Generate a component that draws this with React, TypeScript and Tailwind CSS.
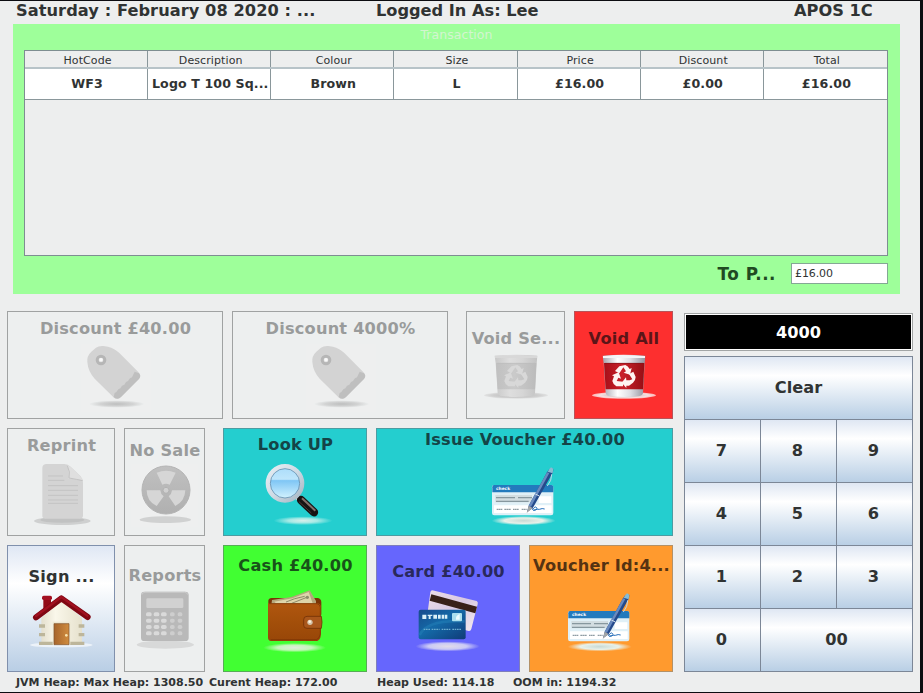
import React from "react";

type IconProps = { muted?: boolean };

const TagIcon = () => (
  <svg width="80" height="80" viewBox="225 114 240 240" className="shrink-0">
    <defs>
      <radialGradient id="tagShadow"><stop offset="0" stopColor="#bdbebe" /><stop offset="0.6" stopColor="#d2d3d3" /><stop offset="1" stopColor="#eceeee" /></radialGradient>
    </defs>
    <rect x="243" y="132" width="210" height="205" fill="#eeefef" />
    <ellipse cx="350" cy="312" rx="82" ry="11" fill="url(#tagShadow)" />
    <path d="M262 186Q260 168 274 155L288 143Q296 137 310 138L324 140Q344 145 358 159L417 218Q425 228 416 238L363 291Q352 301 342 293L284 236Q264 214 262 186Z" fill="#d3d3d3" />
    <path d="M404 215l13 5q8 8-1 18l-53 53q-11 10-22 0l3-12 5-3 6-8 6-3 5-8 7-3 5-8 6-3 6-8 6-3z" fill="#bfbfbf" />
    <circle cx="303" cy="180" r="11.500" fill="#e4e4e4" stroke="#b6b6b6" strokeWidth="9" />
    <circle cx="303" cy="179" r="5" fill="#fafafa" />
  </svg>
);

const BinIcon = ({ muted }: IconProps) => {
  const id = muted ? "binMuted" : "binRed";
  return (
    <svg width="80" height="70" viewBox="76 144 240 210" className="shrink-0">
      <defs>
        <linearGradient id={id}>
          <stop offset="0" stopColor={muted ? "#c8c8c8" : "#a3a3ad"} />
          <stop offset="0.35" stopColor={muted ? "#dedede" : "#ffffff"} />
          <stop offset="0.65" stopColor={muted ? "#d6d6d6" : "#dedee4"} />
          <stop offset="1" stopColor={muted ? "#c3c3c3" : "#92929d"} />
        </linearGradient>
        <linearGradient id={id + "Body"}>
          <stop offset="0" stopColor={muted ? "#c0c0c0" : "#a60f18"} />
          <stop offset="0.45" stopColor={muted ? "#cacaca" : "#c9202a"} />
          <stop offset="1" stopColor={muted ? "#bbbbbb" : "#970e14"} />
        </linearGradient>
        <radialGradient id={id + "Shade"}>
          <stop offset="0" stopColor={muted ? "#b5b5b5" : "#b9a0a0"} />
          <stop offset="0.75" stopColor={muted ? "#d0d0d0" : "#f5e0e0"} />
          <stop offset="1" stopColor={muted ? "#e2e3e3" : "#ffb4b4"} />
        </radialGradient>
      </defs>
      <ellipse cx="196" cy="286" rx="96" ry="10" fill={`url(#${id}Shade)`} />
      <path d="M132 167Q195 162 260 167L258 190 253 280Q252 287 243 288Q195 294 150 288Q143 287 141 280L135 190Z" fill={`url(#${id})`} />
      <path d="M136 189H257L253 268H141Z" fill={`url(#${id}Body)`} />
      <path d="M133 168Q195 164 259 168V174H133Z" fill={muted ? "#d8d8d8" : "#f4f4f7"} />
      <path d="M139 190h115" stroke={muted ? "#bbbbbb" : "#81131b"} strokeWidth="2" />
      <g fill={muted ? "#d8d8d8" : "#fff4f2"}>
        <path d="M182 199l18-4q8 3 13 12l6-3-5 20-19-6 7-4-8-12-12 18-13-7z" />
        <path d="M211 222l13-7 7 16q0 9-8 17l-12 9h-8v7l-14-16 13-16 1 9h10l8-3z" />
        <path d="M166 229l-6-3 20-9 7 19-8-3-5 10 19 2v14h-20q-10-6-12-16z" />
      </g>
    </svg>
  );
};

const DocumentIcon = () => (
  <svg width="80" height="80" viewBox="63 105 240 240" className="shrink-0">
    <ellipse cx="187" cy="303" rx="85" ry="12" fill="#cfd0d0" />
    <ellipse cx="187" cy="300" rx="66" ry="8" fill="#c1c2c2" />
    <path d="M127 143Q128 132 140 132H193Q204 132 212 140L241 168Q249 176 249 188V289Q248 296 240 296H136Q127 295 127 288Z" fill="#d4d4d4" />
    <path d="M201 134Q211 139 219 147L239 167Q247 175 249 184Q241 177 226 178L206 176Q209 158 201 134Z" fill="#dfdfdf" />
    <path d="M202 137Q212 157 207 174Q230 178 248 182" fill="none" stroke="#c3c3c3" strokeWidth="3" />
    <path d="M144 168h45M144 181h49M144 197h90M144 211h90M144 226h90M144 240h90M144 250h90" stroke="#c3c3c3" strokeWidth="3" />
  </svg>
);

const RadiationIcon = () => (
  <svg width="72" height="75" viewBox="385 120 216 225" className="shrink-0">
    <defs><linearGradient id="disc" x1="0" y1="0" x2="0" y2="1"><stop offset="0" stopColor="#c0c0c0" /><stop offset="1" stopColor="#b0b0b0" /></linearGradient></defs>
    <rect x="390" y="132" width="204" height="190" fill="#eeefef" />
    <ellipse cx="494" cy="299" rx="77" ry="10" fill="#d0d1d1" />
    <circle cx="496" cy="210" r="72" fill="url(#disc)" stroke="#b4b4b4" strokeWidth="3" />
    <g fill="#d6d6d6">
      <path d="M468 158Q496 147 525 158L507 194Q496 188 485 194Z" />
      <path d="M438 211H479Q480 223 489 229L468 258Q438 244 438 211Z" />
      <path d="M514 211H554Q553 243 524 258L504 229Q513 223 514 211Z" />
    </g>
    <circle cx="496" cy="211" r="9" fill="#d0d0d0" stroke="#b2b2b2" strokeWidth="3" />
  </svg>
);

const HouseIcon = () => (
  <svg width="80" height="80" viewBox="63 498 240 240" className="shrink-0">
    <defs>
      <linearGradient id="wall"><stop offset="0" stopColor="#e4dfce" /><stop offset="0.35" stopColor="#faf7ea" /><stop offset="1" stopColor="#e6e1cd" /></linearGradient>
      <linearGradient id="door"><stop offset="0" stopColor="#a7652c" /><stop offset="1" stopColor="#d08c3f" /></linearGradient>
    </defs>
    <ellipse cx="184" cy="675" rx="94" ry="7" fill="#f4f8fb" opacity="0.8" />
    <path d="M130 538h23v30l-23 17z" fill="#920b18" />
    <rect x="126" y="527" width="30" height="13" rx="5" fill="#a31021" />
    <path d="M124 594L184 541 246 594V674H124Z" fill="url(#wall)" />
    <g fill="#bdb69b">
      <path d="M117 613h18v10h-18zM117 639h18v10h-18zM117 665h42v10h-42zM236 613h17v10h-17zM236 639h17v10h-17zM210 665h43v10h-43z" />
    </g>
    <path d="M158 605h53v69h-53z" fill="#eee8d3" />
    <path d="M162 611h45v63h-45z" fill="url(#door)" stroke="#81512a" strokeWidth="2" />
    <circle cx="199" cy="646" r="4" fill="#f9e4ae" />
    <path d="M108 592L184 535 263 591" fill="none" stroke="#800713" strokeWidth="18" strokeLinecap="round" strokeLinejoin="round" />
    <path d="M108 588L184 531 262 587" fill="none" stroke="#a01020" strokeWidth="7" strokeLinecap="round" strokeLinejoin="round" />
  </svg>
);

const calcColumns = [436, 459, 481, 508, 531];
const calcRows = [577, 596, 615, 634];

const CalculatorIcon = () => (
  <svg width="72" height="80" viewBox="385 495 216 240" className="shrink-0">
    <ellipse cx="494" cy="674" rx="86" ry="12" fill="#d8d9d9" />
    <rect x="421" y="515" width="143" height="148" rx="10" fill="#b9b9b9" />
    <path d="M424 524q1-7 9-7h119q8 0 9 7" fill="none" stroke="#cbcbcb" strokeWidth="3" />
    <rect x="437" y="535" width="111" height="29" rx="4" fill="#d1d1d1" />
    {calcRows.map((y) => calcColumns.map((x, i) => (
      <rect key={`${x}-${y}`} x={x} y={y} width={i > 2 ? 14 : 17} height="12" rx="5" fill={i > 2 ? "#cecece" : "#dadada"} />
    )))}
  </svg>
);

const MagnifierIcon = () => (
  <svg width="80" height="80" viewBox="120 102 240 240" className="shrink-0">
    <defs>
      <linearGradient id="lens" x1="0" y1="0" x2="0" y2="1"><stop offset="0" stopColor="#a9dcfb" /><stop offset="0.38" stopColor="#bfe6fc" /><stop offset="0.42" stopColor="#7fc6f5" /><stop offset="1" stopColor="#dcf7ff" /></linearGradient>
      <linearGradient id="rim" x1="0" y1="0" x2="1" y2="1"><stop offset="0" stopColor="#e6edf3" /><stop offset="0.5" stopColor="#cfdbe5" /><stop offset="1" stopColor="#a5b5c2" /></linearGradient>
      <radialGradient id="lookGlow"><stop offset="0" stopColor="#d9efea" /><stop offset="0.5" stopColor="#a5e9e5" /><stop offset="1" stopColor="#24cfd0" /></radialGradient>
    </defs>
    <ellipse cx="264" cy="302" rx="88" ry="13" fill="url(#lookGlow)" />
    <path d="M240 226l14 14" stroke="#dbe3e7" strokeWidth="13" />
    <path d="M258 240L297 277" stroke="#171313" strokeWidth="25" strokeLinecap="round" />
    <path d="M261 235L301 272" stroke="#85716c" strokeWidth="6" />
    <path d="M252 245L289 279" stroke="#4a3836" strokeWidth="3" />
    <circle cx="210" cy="190" r="51" fill="url(#lens)" stroke="url(#rim)" strokeWidth="14" />
    <circle cx="210" cy="190" r="44" fill="none" stroke="#6690b0" strokeWidth="2.500" />
  </svg>
);

const CheckIcon = ({ id, glow }: { id: string; glow: string }) => (
  <svg width="80" height="80" viewBox="343 87 240 240" className="shrink-0">
    <defs>
      <radialGradient id={id}><stop offset="0" stopColor="#c8dad5" /><stop offset="0.6" stopColor="#e8f1e9" /><stop offset="1" stopColor={glow} /></radialGradient>
    </defs>
    <ellipse cx="459" cy="302" rx="96" ry="14" fill={`url(#${id})`} />
    <g transform="translate(-3 0)">
      <rect x="367" y="195" width="184" height="91" rx="7" fill="#e0f0f7" />
      <path d="M373 195H545Q551 195 551 202V217H368V202Q368 195 373 195Z" fill="#237abd" />
      <text x="379" y="211" fill="#ffffff" className="font-['DejaVu_Sans'] text-[13px] font-bold tracking-normal">check</text>
      <path d="M377 225h110v22h-110z" fill="#d2dde1" />
      <path d="M507 229h38v20h-38zM373 256h173v23H373z" fill="#fff" />
      <path d="M379 233h57M445 233h42M379 244h98" stroke="#87989f" strokeWidth="4" />
      <path d="M381 268h17M404 268h20M430 268h17M456 268h15" stroke="#8e9ca3" strokeWidth="4" strokeDasharray="5 1" />
      <path d="M488 270q9-14 13-7t-10 8q14-5 18-3 9-4 16-1" fill="none" stroke="#246eba" strokeWidth="3" />
      <path d="M472 276L477 257 532 157Q537 148 544 144L551 147 550 157 489 265Z" fill="#244a8c" />
      <path d="M477 257L532 157l7 2-55 101z" fill="#688abf" />
      <path d="M534 155Q539 146 544 142L551 146 549 160Z" fill="#88bcd3" />
      <path d="M546 163l-3 18-10 17" fill="none" stroke="#c3d9e9" strokeWidth="3" />
      <path d="M471 279l6-22 12 7z" fill="#a3a6a7" />
      <path d="M497 222l12 6" stroke="#d6e1ed" strokeWidth="3" />
    </g>
  </svg>
);

const WalletIcon = () => (
  <svg width="80" height="80" viewBox="120 105 240 240" className="shrink-0">
    <defs>
      <linearGradient id="leather" x1="0" y1="0" x2="0" y2="1"><stop offset="0" stopColor="#b0560f" /><stop offset="0.5" stopColor="#a34f0a" /><stop offset="1" stopColor="#984608" /></linearGradient>
      <radialGradient id="cashGlow"><stop offset="0" stopColor="#e1eddb" /><stop offset="0.55" stopColor="#c5f6bb" /><stop offset="1" stopColor="#41ff32" /></radialGradient>
    </defs>
    <ellipse cx="239" cy="323" rx="94" ry="14" fill="url(#cashGlow)" />
    <path d="M160 182Q161 174 170 174H307Q318 175 319 186V224H160Z" fill="#7a3306" />
    <path d="M171 180L229 171 284 151 303 183V195H169Z" fill="#b4a67a" />
    <path d="M178 185L232 175 281 156 293 190H183Z" fill="#ded5aa" />
    <path d="M213 186q23-11 56-17M230 190l43-17" stroke="#8c8b6a" strokeWidth="3" fill="none" />
    <circle cx="277" cy="172" r="5" fill="#8d8d6c" />
    <path d="M159 190H308Q317 192 318 202V282Q317 299 307 303H168Q159 302 159 293Z" fill="url(#leather)" />
    <path d="M162 191h144q10 2 10 12v78q-2 14-11 18H167" fill="none" stroke="#773305" strokeWidth="2" />
    <path d="M319 229H276Q266 229 266 239V256Q266 265 276 265H319Q323 246 319 229Z" fill="#a9571b" stroke="#743106" strokeWidth="2.500" />
    <circle cx="285" cy="247" r="8" fill="#d4c2a8" />
    <circle cx="284" cy="245" r="4" fill="#fff4dc" />
  </svg>
);

const CardsIcon = () => (
  <svg width="80" height="80" viewBox="114 123 240 240" className="shrink-0">
    <defs>
      <linearGradient id="bankCard" x1="0" y1="0" x2="1" y2="1"><stop offset="0" stopColor="#174b8d" /><stop offset="0.45" stopColor="#1469a7" /><stop offset="1" stopColor="#103b78" /></linearGradient>
      <linearGradient id="backCard" x1="0" y1="0" x2="1" y2="1"><stop offset="0" stopColor="#efdee8" /><stop offset="0.5" stopColor="#d7c8e2" /><stop offset="1" stopColor="#f5edf0" /></linearGradient>
      <radialGradient id="cardGlow"><stop offset="0" stopColor="#e2dce9" /><stop offset="0.6" stopColor="#cac9f5" /><stop offset="1" stopColor="#6867fb" /></radialGradient>
    </defs>
    <ellipse cx="233" cy="319" rx="96" ry="15" fill="url(#cardGlow)" />
    <path d="M187 151L320 183Q325 186 323 193L304 267Q302 274 296 273L170 238 181 157Q182 151 187 151Z" fill="url(#backCard)" />
    <path d="M184 163L321 200 316 220 179 182Z" fill="#382018" />
    <rect x="146" y="209" width="141" height="89" rx="6" fill="url(#bankCard)" />
    <path d="M149 285Q171 238 284 244" fill="none" stroke="#2481b9" strokeWidth="8" opacity="0.5" />
    <path d="M157 224h12v13h-12zM173 224h14v4h-5v9h-6v-9h-3zM190 224h11v12h-11zM204 224h8v12h-8zM215 224h8v12h-8zM225 224h7v12h-7z" fill="#d9eff7" />
    <rect x="246" y="219" width="30" height="25" rx="3" fill="#abe0ee" />
    <path d="M258 239q-2-12 11-17v17z" fill="#eafdff" />
    <path d="M161 268h19M185 268h24M215 268h27M247 268h28" stroke="#6cadd0" strokeWidth="4" strokeDasharray="5 2" />
  </svg>
);

type TileProps = { label: string; tone: string; children: React.ReactNode };

const Tile = ({ label, tone, children }: TileProps) => (
  <button className={`flex flex-col items-center overflow-hidden border text-[16.2px] font-bold tracking-[0.2px] whitespace-nowrap ${tone}`}>
    <span className="-mb-0.5 pl-px leading-[22px]">{label}</span>
    {children}
  </button>
);

const columns = ["HotCode", "Description", "Colour", "Size", "Price", "Discount", "Total"];
const sale = ["WF3", "Logo T 100 Sq...", "Brown", "L", "£16.00", "£0.00", "£16.00"];
const digits = ["7", "8", "9", "4", "5", "6", "1", "2", "3"];
const disabled = "border-[#a0a2a2] bg-[#edefef] text-[#999b9b]";
const keyTone = "border-r border-b border-[#7c8797] bg-linear-to-b from-[#dfe7f3] via-white via-30% to-[#b9cfe5]";

export default function App() {
  return (
    <div className="h-[693px] w-[923px] overflow-hidden bg-[#0c0c10] pt-px font-['DejaVu_Sans',sans-serif] text-[#303333]">
      <div className="flex h-[691px] w-[920px] flex-col overflow-hidden bg-[#edeeee]">
        <header className="flex h-[23px] shrink-0 text-[16.2px] font-bold leading-5 whitespace-nowrap">
          <div className="w-[376px] pl-4 tracking-[0.07px]">Saturday : February 08 2020 : ...</div>
          <div className="w-[418px]">Logged In As: Lee</div>
          <div>APOS 1C</div>
        </header>

        <section className="ml-[13px] h-[270px] w-[887px] shrink-0 bg-[#9eff9a] pr-3 pl-[11px]">
          <h2 className="h-[26px] pt-[3px] pl-px text-center text-[12.6px] leading-4 text-[#d3f5d0]">Transaction</h2>
          <div className="h-[206px] border border-[#7e8e91] bg-[#edeeee]">
            <div className="grid h-[18px] grid-cols-7 border-b-2 border-[#b7c3c8] text-center text-[11px] leading-[19px] tracking-[0.1px]">
              {columns.map((name) => <div key={name} className="h-4 border-r border-[#8a979b] pl-[3px] last:border-r-0">{name}</div>)}
            </div>
            <div className="grid h-[31px] grid-cols-7 border-b border-[#8a979b] bg-white text-center text-[12.6px] font-bold leading-[29px] tracking-[0.1px] whitespace-nowrap">
              {sale.map((value, i) => <div key={i} className="border-r border-[#8a979b] pl-0.5 last:border-r-0">{value}</div>)}
            </div>
          </div>
          <div className="flex items-center justify-end pt-[6px]">
            <span className="mr-[15px] pt-0.5 text-[16.8px] font-bold leading-5 tracking-[0.5px] text-[#214a22]">To P...</span>
            <div className="h-[21px] w-[97px] border border-[#84a894] bg-white pl-[3px] text-[11px] leading-5 tracking-[-0.1px]">£16.00</div>
          </div>
        </section>

        <main className="mt-[17px] flex h-[361px] shrink-0 pl-[7px]">
          <div className="flex w-[666px] flex-col gap-[9px]">
            <div className="flex h-[108px]">
              <Tile label="Discount £40.00" tone={`w-[216px] pt-1.5 ${disabled}`}><TagIcon /></Tile>
              <Tile label="Discount 4000%" tone={`ml-[9px] w-[216px] pt-1.5 ${disabled}`}><TagIcon /></Tile>
              <Tile label="Void Se..." tone={`ml-[18px] w-[99px] pt-4 ${disabled}`}><BinIcon muted /></Tile>
              <Tile label="Void All" tone="ml-[9px] w-[99px] border-[#b85359] bg-[#fd2f2f] pt-4 text-[#5b1518]"><BinIcon /></Tile>
            </div>
            <div className="flex h-[108px]">
              <Tile label="Reprint" tone={`w-[108px] pt-1.5 ${disabled}`}><DocumentIcon /></Tile>
              <Tile label="No Sale" tone={`ml-[9px] w-[81px] pt-[11px] ${disabled}`}><RadiationIcon /></Tile>
              <Tile label="Look UP" tone="ml-[18px] w-[144px] border-[#4d9ca2] bg-[#24cecf] pt-[5px] text-[#144447]"><MagnifierIcon /></Tile>
              <Tile label="Issue Voucher £40.00" tone="ml-[9px] w-[297px] border-[#4d9ca2] bg-[#24cecf] text-[#144447]"><CheckIcon id="issueGlow" glow="#24cecf" /></Tile>
            </div>
            <div className="flex h-[127px]">
              <Tile label="Sign ..." tone="w-[108px] border-[#8090ac] bg-linear-to-b from-[#dfe7f4] via-white via-30% to-[#b9cee5] pt-5"><HouseIcon /></Tile>
              <Tile label="Reports" tone={`ml-[9px] w-[81px] pt-[19px] ${disabled}`}><CalculatorIcon /></Tile>
              <Tile label="Cash £40.00" tone="ml-[18px] w-[144px] border-[#56ad55] bg-[#41ff32] pt-[9px] text-[#185319]"><WalletIcon /></Tile>
              <Tile label="Card £40.00" tone="ml-[9px] w-[144px] border-[#7e7ebc] bg-[#6666fd] pt-[15px] text-[#29295c]"><CardsIcon /></Tile>
              <Tile label="Voucher Id:4..." tone="ml-[9px] w-[144px] border-[#b39167] bg-[#ff9a2e] pt-[9px] text-[#553312]"><CheckIcon id="voucherGlow" glow="#ff9a2e" /></Tile>
            </div>
          </div>

          <aside className="ml-[11px] w-[229px] pt-[2px] text-[16.2px] font-bold">
            <div className="h-[38px] border border-[#a2a5a5] bg-white p-px">
              <div className="h-full bg-black text-center leading-[35px] text-white">4000</div>
            </div>
            <div className="mt-[5px] grid h-[316px] grid-cols-3 grid-rows-5 border-t border-l border-[#7c8797]">
              <button className={`col-span-3 ${keyTone}`}>Clear</button>
              {digits.map((digit) => <button key={digit} className={`pr-0.5 ${keyTone}`}>{digit}</button>)}
              <button className={`pr-0.5 ${keyTone}`}>0</button>
              <button className={`col-span-2 ${keyTone}`}>00</button>
            </div>
          </aside>
        </main>

        <footer className="flex pl-4 text-[11px] font-bold leading-[22px] whitespace-nowrap">
          <span className="w-[193px]">JVM Heap: Max Heap: 1308.50</span>
          <span className="w-[168px]">Curent Heap: 172.00</span>
          <span className="w-[136px]">Heap Used: 114.18</span>
          <span>OOM in: 1194.32</span>
        </footer>
      </div>
    </div>
  );
}
